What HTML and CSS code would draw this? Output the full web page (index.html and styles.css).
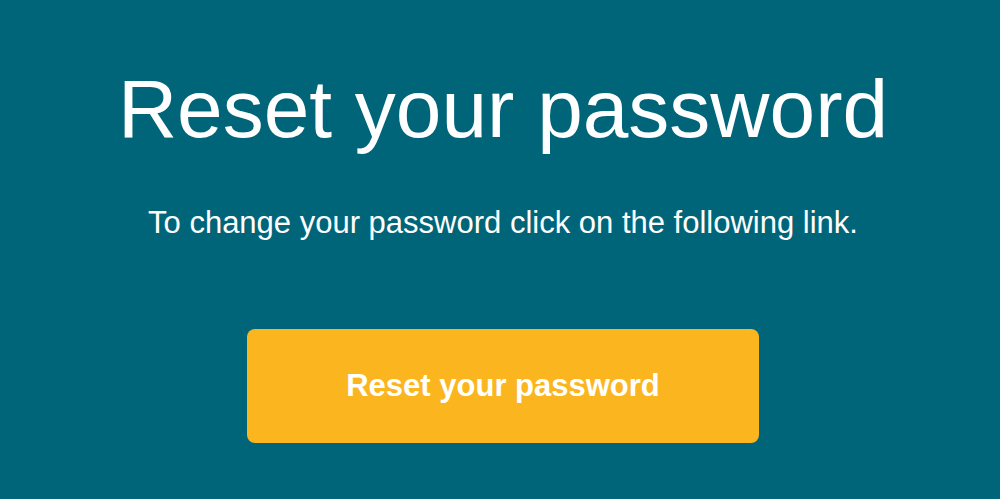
FILE: index.html
```html
<!DOCTYPE html>
<html lang="en">
<head>
<meta charset="utf-8">
<title>Reset your password</title>
<link rel="stylesheet" href="styles.css">
</head>
<body>
<main class="card">
  <h1 class="title">Reset your password</h1>
  <p class="lead">To change your password click on the following link.</p>
  <a class="btn" href="#">Reset your password</a>
</main>
</body>
</html>
```
FILE: styles.css
```css
html, body {
  margin: 0;
  padding: 0;
  height: 100%;
}
body {
  background: #006579;
  font-family: "Liberation Sans", Arial, sans-serif;
  color: #ffffff;
}
.card {
  display: flex;
  flex-direction: column;
  align-items: center;
  padding: 61px 0 0 6px;
}
.title {
  margin: 0;
  font-size: 82px;
  font-weight: normal;
  line-height: 96px;
}
.lead {
  margin: 48px 0 0;
  font-size: 31px;
  line-height: 36px;
}
.btn {
  margin-top: 88px;
  width: 512px;
  height: 114px;
  border-radius: 8px;
  background: #fbb61f;
  color: #ffffff;
  text-decoration: none;
  font-weight: bold;
  font-size: 31px;
  display: flex;
  align-items: center;
  justify-content: center;
}
```
